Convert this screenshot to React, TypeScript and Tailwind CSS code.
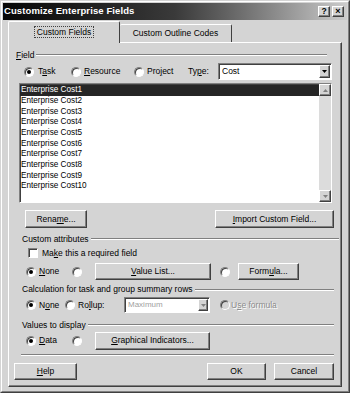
import React from "react";

const raised =
  "border border-t-white border-l-white border-r-[#404040] border-b-[#404040] shadow-[inset_-1px_-1px_0_#808080] bg-[#d4d4d4]";
const sunken =
  "border border-t-[#808080] border-l-[#808080] border-r-white border-b-white shadow-[inset_1px_1px_0_#404040]";

function U({ children }: { children: React.ReactNode }) {
  return <span className="underline underline-offset-[1px]">{children}</span>;
}

function Btn({ className, children }: { className: string; children: React.ReactNode }) {
  return (
    <div className={`flex items-center justify-center text-[8.5px] text-black ${raised} ${className}`}>
      {children}
    </div>
  );
}

function Radio({ checked, disabled }: { checked?: boolean; disabled?: boolean }) {
  return (
    <span
      className={`flex w-[10px] h-[10px] shrink-0 items-center justify-center rounded-full ${sunken} ${
        disabled ? "bg-[#d4d4d4]" : "bg-white"
      }`}
    >
      {checked && <span className="block h-[4px] w-[4px] rounded-full bg-black" />}
    </span>
  );
}

function Etched({ className }: { className?: string }) {
  return <div className={`h-[2px] border-t border-t-[#808080] border-b border-b-white ${className ?? ""}`} />;
}

function Header({ label, mr, className }: { label: React.ReactNode; mr: string; className: string }) {
  return (
    <div className={`flex items-center ${className}`}>
      <span className="whitespace-nowrap text-[8.5px]">{label}</span>
      <Etched className={`ml-[2px] flex-1 ${mr}`} />
    </div>
  );
}

function DownArrow({ light }: { light?: boolean }) {
  return (
    <svg width="5" height="3" viewBox="0 0 5 3">
      <path d="M0 0H5L2.5 3Z" fill={light ? "#808080" : "#000"} />
    </svg>
  );
}

function UpArrow() {
  return (
    <svg width="5" height="3" viewBox="0 0 5 3">
      <path d="M0 3H5L2.5 0Z" fill="#808080" />
    </svg>
  );
}

export default function App() {
  const items = Array.from({ length: 10 }, (_, i) => `Enterprise Cost${i + 1}`);
  return (
    <div className="h-[393px] w-[350px] bg-[#d4d4d4] font-['Liberation_Sans',Arial,sans-serif] text-black">
      <div className="h-full w-full border border-t-[#d4d4d4] border-l-[#d4d4d4] border-r-[#404040] border-b-[#404040]">
        <div className="flex h-full w-full flex-col border border-t-white border-l-white border-r-[#808080] border-b-[#808080] p-[1px]">
          {/* Title bar */}
          <div className="flex h-[17px] shrink-0 items-center bg-gradient-to-r from-[#080808] via-[#3a3a3a] to-[#cccccc] pl-[1px] pr-[3px]">
            <span className="text-[9.5px] font-bold tracking-[0.1px] text-white">Customize Enterprise Fields</span>
            <div className={`ml-auto flex h-[11px] w-[12px] items-center justify-center text-[8.5px] font-bold leading-none ${raised}`}>
              ?
            </div>
            <div className={`ml-[2px] flex h-[11px] w-[12px] items-center justify-center text-[9px] font-bold leading-none ${raised}`}>
              ×
            </div>
          </div>

          {/* Tabs */}
          <div className="flex h-[22px] shrink-0 items-end pl-[5px]">
            <div className="relative z-10 -mb-[1px] flex h-[22px] w-[112px] items-start justify-center rounded-t-[2px] border-t border-l border-r border-t-white border-l-white border-r-[#404040] bg-[#d4d4d4] pt-[4px]">
              <span className="border border-dotted border-[#404040] px-[2px] text-[8.5px] leading-[10px]">Custom Fields</span>
            </div>
            <div className="flex h-[18px] w-[112px] items-start justify-center rounded-t-[2px] border-t border-r border-t-white border-r-[#404040] pt-[3px]">
              <span className="text-[8.5px] leading-[10px]">Custom Outline Codes</span>
            </div>
          </div>

          {/* Panel */}
          <div className="ml-[5px] h-[345px] w-[334px] shrink-0 border border-t-white border-l-white border-r-[#404040] border-b-[#404040] shadow-[inset_-1px_-1px_0_#808080]">
            <div className="flex flex-col">
              {/* Field header */}
              <Header
                className="mt-[5px] h-[14px] pl-[7px]"
                mr="mr-[14px]"
                label={
                  <>
                    <U>F</U>ield
                  </>
                }
              />
              {/* Radio row */}
              <div className="mt-[1px] flex h-[17px] items-center pl-[15px] text-[8.5px]">
                <div className="flex w-[47px] items-center gap-[4px]">
                  <Radio checked />
                  <span>
                    T<U>a</U>sk
                  </span>
                </div>
                <div className="flex w-[63px] items-center gap-[3px]">
                  <Radio />
                  <span>
                    <U>R</U>esource
                  </span>
                </div>
                <div className="flex w-[54px] items-center gap-[3px]">
                  <Radio />
                  <span>
                    Pro<U>j</U>ect
                  </span>
                </div>
                <span className="w-[30px]">
                  Ty<U>p</U>e:
                </span>
                <div className={`flex h-[17px] w-[114px] items-center bg-white ${sunken}`}>
                  <span className="flex-1 pl-[3px]">Cost</span>
                  <div className={`mr-[1px] flex h-[13px] w-[11px] items-center justify-center ${raised}`}>
                    <DownArrow />
                  </div>
                </div>
              </div>

              {/* List */}
              <div className={`mt-[3px] ml-[10px] flex h-[120px] w-[313px] bg-white ${sunken} border-[#808080]`}>
                <div className="flex flex-1 flex-col pt-[1px]">
                  {items.map((t, i) => (
                    <div
                      key={t}
                      className={`flex h-[10.7px] items-center pl-[1px] text-[8.2px] leading-none ${
                        i === 0 ? "bg-[#262626] text-white" : ""
                      }`}
                    >
                      {t}
                    </div>
                  ))}
                </div>
                <div className="flex w-[12px] flex-col bg-[#dcdcdc]">
                  <div className={`flex h-[12px] items-center justify-center ${raised}`}>
                    <UpArrow />
                  </div>
                  <div className="flex-1" />
                  <div className={`flex h-[12px] items-center justify-center ${raised}`}>
                    <DownArrow light />
                  </div>
                </div>
              </div>

              {/* Rename / Import */}
              <div className="mt-[7px] flex h-[18px] items-center">
                <Btn className="ml-[16px] h-[18px] w-[62px]">
                  <span>
                    Rena<U>m</U>e...
                  </span>
                </Btn>
                <Btn className="ml-auto mr-[7px] h-[18px] w-[119px]">
                  <span>
                    <U>I</U>mport Custom Field...
                  </span>
                </Btn>
              </div>

              {/* Custom attributes */}
              <Header className="mt-[4px] h-[14px] pl-[13px]" mr="mr-[2px]" label="Custom attributes" />
              <div className="mt-[1px] flex h-[12px] items-center pl-[19px] text-[8.5px]">
                <span className={`h-[10px] w-[10px] shrink-0 bg-white ${sunken}`} />
                <span className="ml-[4px]">
                  Ma<U>k</U>e this a required field
                </span>
              </div>
              <div className="mt-[4px] flex h-[17px] items-center pl-[17px] text-[8.5px]">
                <div className="flex w-[46px] items-center gap-[3px]">
                  <Radio checked />
                  <span>
                    <U>N</U>one
                  </span>
                </div>
                <div className="flex w-[23px] items-center">
                  <Radio />
                </div>
                <Btn className="h-[17px] w-[116px]">
                  <span>
                    <U>V</U>alue List...
                  </span>
                </Btn>
                <div className="flex w-[27px] items-center pl-[9px]">
                  <Radio />
                </div>
                <Btn className="h-[17px] w-[61px]">
                  <span>
                    Form<U>u</U>la...
                  </span>
                </Btn>
              </div>

              {/* Calculation */}
              <Header
                className="mt-[3px] h-[13px] pl-[13px]"
                mr="mr-[7px]"
                label="Calculation for task and group summary rows"
              />
              <div className="mt-[1px] flex h-[16px] items-center pl-[17px] text-[8.5px]">
                <div className="flex w-[39px] items-center gap-[3px]">
                  <Radio checked />
                  <span>
                    N<U>o</U>ne
                  </span>
                </div>
                <div className="flex w-[59px] items-center gap-[3px]">
                  <Radio />
                  <span>
                    Ro<U>l</U>lup:
                  </span>
                </div>
                <div className={`flex h-[16px] w-[86px] items-center bg-white ${sunken}`}>
                  <span className="flex-1 pl-[3px] text-[8px] text-[#a0a0a0]">Maximum</span>
                  <div className={`mr-[1px] flex h-[12px] w-[10px] items-center justify-center ${raised}`}>
                    <DownArrow light />
                  </div>
                </div>
                <div className="ml-[10px] flex items-center gap-[1px]">
                  <Radio disabled />
                  <span className="text-[#8c8c8c] [text-shadow:1px_1px_0_#ffffff]">
                    U<U>s</U>e formula
                  </span>
                </div>
              </div>

              {/* Values to display */}
              <Header className="mt-[5px] h-[14px] pl-[13px]" mr="mr-[7px]" label="Values to display" />
              <div className="flex h-[17px] items-center pl-[17px] text-[8.5px]">
                <div className="flex w-[46px] items-center gap-[3px]">
                  <Radio checked />
                  <span>
                    <U>D</U>ata
                  </span>
                </div>
                <div className="flex w-[23px] items-center">
                  <Radio />
                </div>
                <Btn className="h-[18px] w-[115px]">
                  <span>
                    <U>G</U>raphical Indicators...
                  </span>
                </Btn>
              </div>

              <Etched className="mt-[5px] ml-[12px] mr-[7px]" />

              {/* Bottom buttons */}
              <div className="mt-[7px] flex h-[17px] items-center">
                <Btn className="ml-[5px] h-[17px] w-[63px]">
                  <span>
                    <U>H</U>elp
                  </span>
                </Btn>
                <Btn className="ml-auto h-[17px] w-[59px]">OK</Btn>
                <Btn className="ml-[8px] mr-[7px] h-[17px] w-[60px]">Cancel</Btn>
              </div>
            </div>
          </div>
        </div>
      </div>
    </div>
  );
}
